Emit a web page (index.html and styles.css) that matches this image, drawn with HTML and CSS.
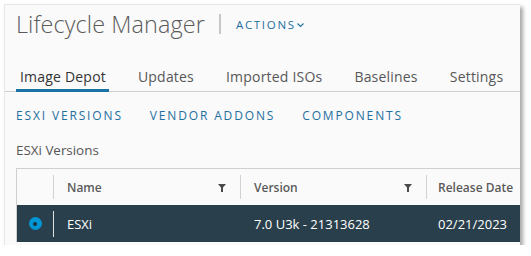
FILE: index.html
```html
<!DOCTYPE html>
<html>
<head>
<meta charset="utf-8">
<link rel="stylesheet" href="styles.css">
</head>
<body>
<div class="panel">
  <div class="header">
    <h1 class="title">Lifecycle Manager</h1>
    <span class="divider"></span>
    <button class="actions">ACTIONS
      <svg class="chev" width="9" height="6" viewBox="0 0 9 6"><path d="M1.5 1.5 L4.5 4.5 L7.5 1.5" fill="none" stroke="#1f6f9f" stroke-width="1.1"/></svg>
    </button>
  </div>
  <nav class="tabs">
    <span class="tab active">Image Depot</span>
    <span class="tab">Updates</span>
    <span class="tab">Imported ISOs</span>
    <span class="tab">Baselines</span>
    <span class="tab">Settings</span>
  </nav>
  <nav class="subnav">
    <span class="sublink">ESXI VERSIONS</span>
    <span class="sublink">VENDOR ADDONS</span>
    <span class="sublink">COMPONENTS</span>
  </nav>
  <div class="section-label">ESXi Versions</div>
  <div class="grid">
    <div class="row head">
      <div class="cell sel"></div>
      <div class="cell">Name<svg class="filter" width="8" height="8" viewBox="0 0 8 8"><path d="M0 0 H8 L5 3.5 V8 H3 V3.5 Z" fill="#4a4a4a"/></svg></div>
      <div class="cell">Version<svg class="filter" width="8" height="8" viewBox="0 0 8 8"><path d="M0 0 H8 L5 3.5 V8 H3 V3.5 Z" fill="#4a4a4a"/></svg></div>
      <div class="cell last">Release Date</div>
    </div>
    <div class="row body selected">
      <div class="cell sel"><span class="radio"></span></div>
      <div class="cell">ESXi</div>
      <div class="cell">7.0 U3k - 21313628</div>
      <div class="cell last">02/21/2023</div>
    </div>
  </div>
</div>
</body>
</html>
```
FILE: styles.css
```css
* { box-sizing: border-box; }
html, body { margin: 0; padding: 0; background: #fff; }
body { font-family: "Open Sans", "DejaVu Sans", sans-serif; color: #565656; }

.panel {
  margin: 4px 0 0 4px;
  width: 516px;
  height: 241px;
  background: #fafafa;
  border-top: 1px solid #e8e8e8;
  border-left: 1px solid #e8e8e8;
  box-shadow: 3px 3px 4px rgba(0,0,0,0.35);
  overflow: hidden;
  padding-left: 11px;
}

.header {
  display: flex;
  align-items: center;
  height: 38px;
}
.title {
  margin: 0;
  font-size: 23.4px;
  font-weight: 300;
  color: #5a5a5a;
  letter-spacing: 0.1px;
  white-space: nowrap;
}
.divider {
  width: 2px;
  height: 20px;
  background: #c6c6c6;
  margin: 0 15px 0 14px;
}
.actions {
  border: 0;
  background: none;
  padding: 0;
  font-family: inherit;
  font-size: 11.5px;
  font-weight: 500;
  letter-spacing: 1.7px;
  color: #1f6f9f;
  display: flex;
  align-items: center;
  gap: 0;
  margin-top: 1px;
}

.tabs {
  display: flex;
  margin-top: 19px;
  height: 30px;
  border-bottom: 1px solid #cfcfcf;
  width: 520px;
  margin-left: -11px;
  padding-left: 11px;
  white-space: nowrap;
}
.tab {
  flex-shrink: 0;
  font-size: 14px;
  letter-spacing: 0.2px;
  color: #575757;
  padding: 0 4px;
  margin-right: 24px;
  line-height: 29px;
  height: 30px;
}
.tab.active {
  color: #333;
  border-bottom: 3px solid #1a73a6;
  padding: 0 3px 0 4px;
  margin-right: 25px;
}

.subnav {
  display: flex;
  gap: 27px;
  margin-top: 13px;
  height: 20px;
  align-items: center;
  white-space: nowrap;
}
.sublink {
  font-size: 12px;
  font-weight: 500;
  letter-spacing: 1.85px;
  color: #1f6f9f;
}

.section-label {
  font-size: 13.4px;
  color: #565656;
  margin-top: 16px;
  height: 18px;
  line-height: 18px;
}

.grid {
  margin-top: 9px;
  width: 520px;
  border-top: 1px solid #cfcfcf;
  border-left: 1px solid #cfcfcf;
}
.row {
  display: grid;
  grid-template-columns: 36px 187px 186px 1fr;
  align-items: center;
  white-space: nowrap;
}
.row.head {
  height: 36px;
  background: #fafafa;
  font-size: 12px;
  font-weight: 600;
  color: #5a5a5a;
}
.row.body {
  height: 37px;
  font-size: 13px;
}
.row.selected {
  background: #2a3f4c;
  color: #fff;
}
.cell {
  display: flex;
  align-items: center;
  justify-content: space-between;
  height: 24px;
  padding: 0 14px 0 13px;
  border-left: 1px solid #d2d2d2;
}
.cell:first-child { border-left: 0; }
.cell.last { padding-left: 11px; }
.row.selected .cell { border-left-color: #e0e0e0; height: 26px; }
.row.selected .cell:nth-child(n+3) { border-left-color: transparent; }
.cell.sel { justify-content: center; padding: 0; }
.filter { margin-top: 2px; margin-right: 0; }
.radio {
  width: 13px;
  height: 13px;
  border-radius: 50%;
  background: #0095d3;
  position: relative;
}
.radio::after {
  content: "";
  position: absolute;
  left: 4.5px;
  top: 4.5px;
  width: 4px;
  height: 4px;
  border-radius: 50%;
  background: #1c2f3b;
}
```
